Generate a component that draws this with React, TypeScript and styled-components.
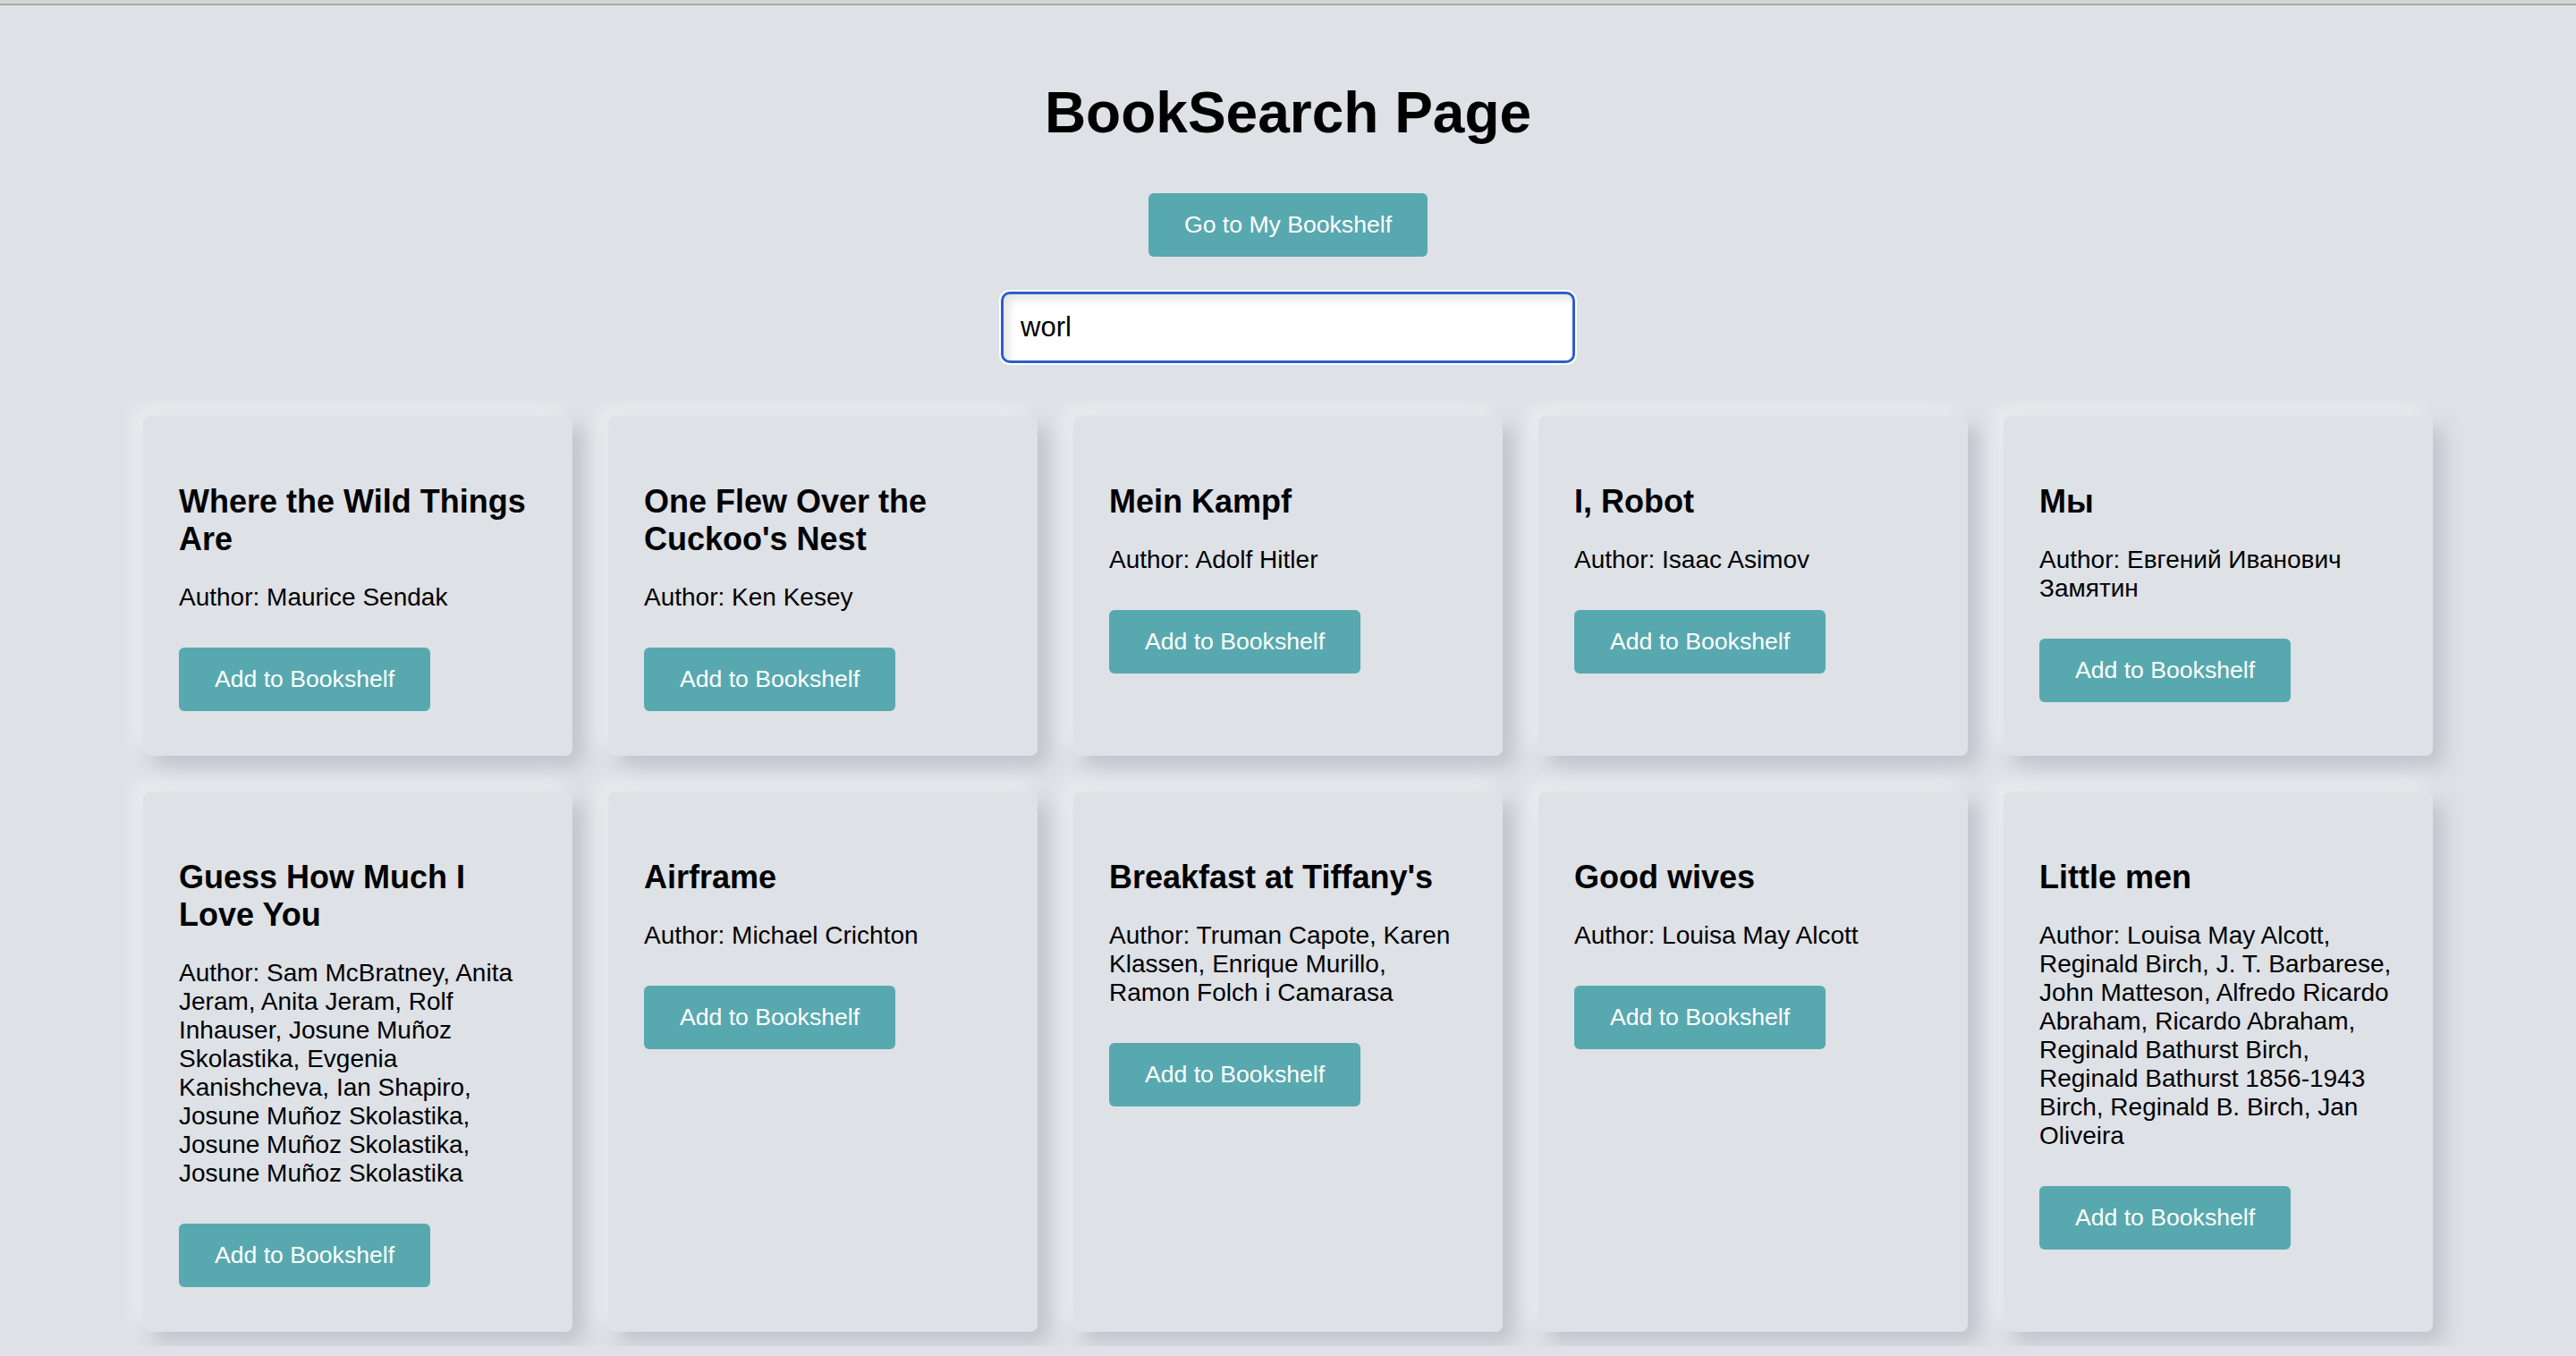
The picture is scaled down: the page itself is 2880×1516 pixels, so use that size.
import React, { useState } from "react";
import styled, { createGlobalStyle } from "styled-components";

interface Book {
  title: string;
  authors: string;
}

const books: Book[] = [
  { title: "Where the Wild Things Are", authors: "Maurice Sendak" },
  { title: "One Flew Over the Cuckoo's Nest", authors: "Ken Kesey" },
  { title: "Mein Kampf", authors: "Adolf Hitler" },
  { title: "I, Robot", authors: "Isaac Asimov" },
  { title: "Мы", authors: "Евгений Иванович Замятин" },
  {
    title: "Guess How Much I Love You",
    authors:
      "Sam McBratney, Anita Jeram, Anita Jeram, Rolf Inhauser, Josune Muñoz Skolastika, Evgenia Kanishcheva, Ian Shapiro, Josune Muñoz Skolastika, Josune Muñoz Skolastika, Josune Muñoz Skolastika",
  },
  { title: "Airframe", authors: "Michael Crichton" },
  {
    title: "Breakfast at Tiffany's",
    authors: "Truman Capote, Karen Klassen, Enrique Murillo, Ramon Folch i Camarasa",
  },
  { title: "Good wives", authors: "Louisa May Alcott" },
  {
    title: "Little men",
    authors:
      "Louisa May Alcott, Reginald Birch, J. T. Barbarese, John Matteson, Alfredo Ricardo Abraham, Ricardo Abraham, Reginald Bathurst Birch, Reginald Bathurst 1856-1943 Birch, Reginald B. Birch, Jan Oliveira",
  },
];

const App: React.FC = () => {
  const [query, setQuery] = useState("worl");

  return (
    <>
      <GlobalStyle />
      <TopEdge />
      <Page>
        <Title>BookSearch Page</Title>
        <Button>Go to My Bookshelf</Button>
        <SearchInput value={query} onChange={(e) => setQuery(e.target.value)} />
        <Grid>
          {books.map((book) => (
            <Card key={book.title}>
              <BookTitle>{book.title}</BookTitle>
              <Author>Author: {book.authors}</Author>
              <span>
                <Button>Add to Bookshelf</Button>
              </span>
            </Card>
          ))}
        </Grid>
      </Page>
    </>
  );
};

const GlobalStyle = createGlobalStyle`
  html, body {
    margin: 0;
    padding: 0;
    background: #dee1e6;
    overflow: hidden;
  }

  body {
    font-family: "Liberation Sans", Arial, sans-serif;
    color: #000;
  }

  * {
    box-sizing: border-box;
  }
`;

const TopEdge = styled.div`
  height: 6px;
  background: #d6d6d6;
  border-bottom: 2px solid #ababab;
`;

const Page = styled.main`
  display: flex;
  flex-direction: column;
  align-items: center;

  padding: 83px 160px 16px;
`;

const Title = styled.h1`
  margin: 0 0 53px;

  font-size: 64px;
  font-weight: 700;
`;

const Button = styled.button`
  padding: 20px 40px;

  font-family: "Liberation Sans", Arial, sans-serif;
  font-size: 26.6px;
  color: #fff;

  background: #58a9af;
  border: none;
  border-radius: 6px;
  cursor: pointer;
`;

const SearchInput = styled.input`
  width: 642px;
  height: 80px;
  margin: 39px 0 59px;
  padding: 0 19px;

  font-family: "Liberation Sans", Arial, sans-serif;
  font-size: 31px;
  color: #000;

  background: #fff;
  border: 3px solid #2b5fcc;
  border-radius: 10px;
  outline: none;
  box-shadow: 0 0 0 2px #fff, inset 6px 6px 10px rgba(0, 0, 0, 0.1);
`;

const Grid = styled.section`
  display: grid;
  grid-template-columns: repeat(5, 1fr);
  gap: 40px;

  width: 100%;
`;

const Card = styled.article`
  display: flex;
  flex-direction: column;
  align-items: flex-start;

  padding: 75px 40px 50px;

  background: #dee1e6;
  border-radius: 8px;
  box-shadow: 12px 12px 22px #bfc3cb, -10px -10px 20px #eceef1;
`;

const BookTitle = styled.h2`
  margin: 0 0 28px;

  font-size: 36px;
  font-weight: 700;
`;

const Author = styled.p`
  margin: 0 0 40px;

  font-size: 28px;
`;

export default App;
